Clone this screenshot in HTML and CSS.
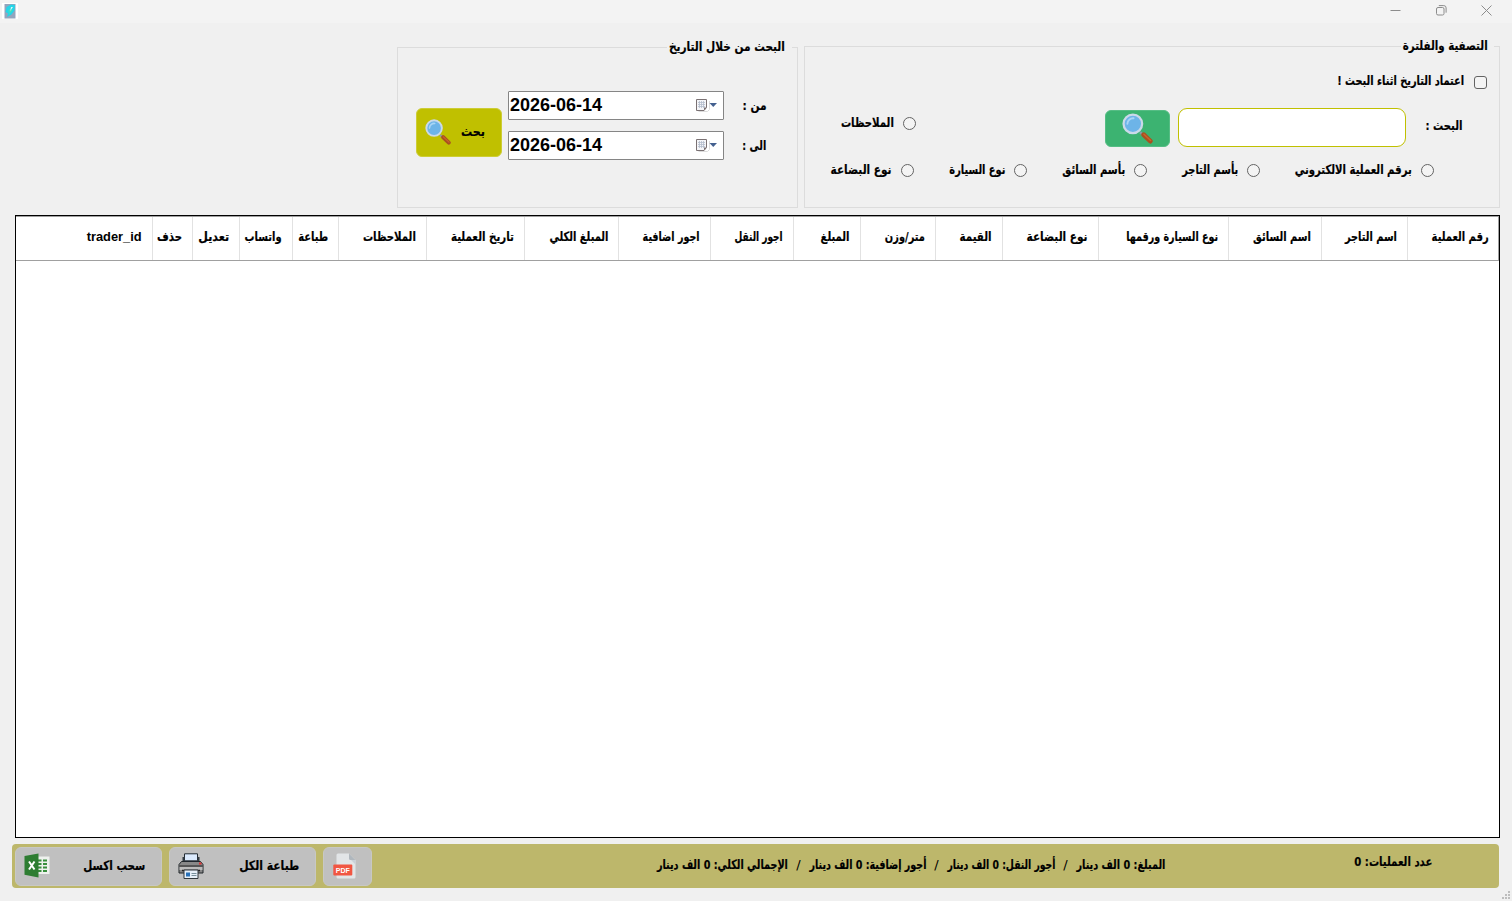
FILE: index.html
```html
<!DOCTYPE html>
<html lang="ar">
<head>
<meta charset="utf-8">
<title>العمليات</title>
<link rel="stylesheet" href="styles.css">
</head>
<body>
<svg class="defs" width="0" height="0">
  <symbol id="mag" viewBox="0 0 30 30">
    <path d="M17.5 18.5l3 3" stroke="#8a9aa8" stroke-width="2.4"/>
    <path d="M21 21l6.400 6.200" stroke="#a9501f" stroke-width="4.600" stroke-linecap="round"/>
    <path d="M21.200 20.600l6.500 6.100" stroke="#c9652b" stroke-width="1.400" stroke-linecap="round"/>
    <circle cx="10.500" cy="10.500" r="9" fill="#6db4e8" stroke="#cbd9e8" stroke-width="2.200"/>
    <path d="M5.200 10.500a5.500 5.500 0 0 1 6-5.400" fill="none" stroke="#a9d5f5" stroke-width="1.800" stroke-linecap="round"/>
  </symbol>
  <symbol id="cal" viewBox="0 0 22 14">
    <path d="M2.500 13.500h9l2-2V3" fill="none" stroke="#dcdcdc"/>
    <path d="M.5 1.500h10v8L8 12.500H.5z" fill="#f4f5f8" stroke="#7a7173"/>
    <path d="M2 4.500h7M2 6.500h7M2 8.500h7M3.500 3v7M5.500 3v7M7.500 3v7" stroke="#b4bccb" stroke-width=".8"/>
    <path d="M8 12.500V9.500h2.800z" fill="#7a7173"/>
    <path d="M13.500 5h7.500l-3.750 4z" fill="#44608f"/>
  </symbol>
</svg>

<header class="titlebar">
  <svg class="app-icon" width="16" height="16" viewBox="0 0 16 16">
    <path fill="#fff" d="M0 0h16v16H0z"/><path fill="#93a5bd" d="M2.500 1h11v14.500h-11z"/>
    <path fill="#25d5e8" d="M9 1.500l4 .5-.5 5.500-3 4-4.500 2.500 1-3.500-2.500-1.500 1-5z"/><path fill="#4fe3b0" d="M9 5L6 8.500h2L6.500 12l4-5H8.300z"/><path fill="#d9f7f6" d="M9 4h2L8.200 8z"/>
  </svg>
  <div class="controls">
    <svg width="11" height="11" viewBox="0 0 11 11"><path d="M.5 5.500h10"/></svg>
    <svg width="11" height="11" viewBox="0 0 11 11"><rect x=".5" y="2.500" width="7.500" height="7.500" rx="1.500"/><path d="M2.800.6h5a2.300 2.300 0 0 1 2.300 2.300v4.800"/></svg>
    <svg width="11" height="11" viewBox="0 0 11 11"><path d="M.5.5l10 10M10.500.5l-10 10"/></svg>
  </div>
</header>

<main>
  <div class="groups">
    <section class="group dates">
      <h2 class="legend"><span class="t" data-w="116">البحث من خلال التاريخ</span></h2>
      <button class="btn find"><svg width="26" height="26"><use href="#mag"/></svg><span class="t" data-w="24">بحث</span></button>
      <div class="date-rows">
        <div class="date-row"><div class="date"><span>2026-06-14</span><svg width="22" height="14"><use href="#cal"/></svg></div><span class="t" data-w="24">من :</span></div>
        <div class="date-row"><div class="date"><span>2026-06-14</span><svg width="22" height="14"><use href="#cal"/></svg></div><span class="t" data-w="24">الى :</span></div>
      </div>
    </section>

    <section class="group filters" dir="rtl">
      <h2 class="legend"><span class="t" data-w="85">التصفية والفلترة</span></h2>
      <label class="option by-date"><i class="check"></i><span class="t" data-w="127">اعتماد التاريخ اثناء البحث !</span></label>
      <div class="search-row">
        <span class="t" data-w="37">البحث :</span>
        <input class="search" type="text">
        <button class="btn go"><svg width="31" height="31"><use href="#mag"/></svg></button>
        <label class="option notes"><i class="radio"></i><span class="t" data-w="53">الملاحظات</span></label>
      </div>
      <div class="radio-row">
        <label class="option"><i class="radio"></i><span class="t" data-w="117">برقم العملية الالكتروني</span></label>
        <label class="option"><i class="radio"></i><span class="t" data-w="56">بأسم التاجر</span></label>
        <label class="option"><i class="radio"></i><span class="t" data-w="63">بأسم السائق</span></label>
        <label class="option"><i class="radio"></i><span class="t" data-w="56">نوع السيارة</span></label>
        <label class="option"><i class="radio"></i><span class="t" data-w="61">نوع البضاعة</span></label>
      </div>
    </section>
  </div>

  <section class="table">
    <div class="thead" dir="rtl">
      <div><span class="t" data-w="57">رقم العملية</span></div>
      <div><span class="t" data-w="52">اسم التاجر</span></div>
      <div><span class="t" data-w="58">اسم السائق</span></div>
      <div><span class="t" data-w="92">نوع السيارة ورقمها</span></div>
      <div><span class="t" data-w="61">نوع البضاعة</span></div>
      <div><span class="t" data-w="32">القيمة</span></div>
      <div><span class="t" data-w="40">متر/وزن</span></div>
      <div><span class="t" data-w="29">المبلغ</span></div>
      <div><span class="t" data-w="48">اجور النقل</span></div>
      <div><span class="t" data-w="57">اجور اضافية</span></div>
      <div><span class="t" data-w="59">المبلغ الكلي</span></div>
      <div><span class="t" data-w="63">تاريخ العملية</span></div>
      <div><span class="t" data-w="53">الملاحظات</span></div>
      <div><span class="t" data-w="30">طباعة</span></div>
      <div><span class="t" data-w="37">واتساب</span></div>
      <div><span class="t" data-w="31">تعديل</span></div>
      <div><span class="t" data-w="25">حذف</span></div>
      <div><span class="t latin" data-w="55">trader_id</span></div>
    </div>
  </section>

  <footer class="bar">
    <button class="btn tool wide">
      <svg width="26" height="26" viewBox="0 0 26 26"><path fill="#eef1ee" d="M13 3.500h12.500v17.500H13z"/><path d="M14 7.500h3.500M14 11h3.500M14 14.500h3.500M14 18h3.500M19 7.500h4M19 11h4M19 14.500h4M19 18h4" stroke="#388e3c" stroke-width="2"/><path fill="#2e7d32" d="M.5 3L14.500.5v24L.5 21.700z"/><path d="M5 8.500l5.500 8M10.500 8.500L5 16.500" stroke="#fff" stroke-width="2"/></svg>
      <span class="t" data-w="62">سحب اكسل</span>
    </button>
    <button class="btn tool wide">
      <svg width="26" height="26" viewBox="0 0 26 26"><path fill="#888" stroke="#20262b" d="M3.500 8.500h19l2.500 3v8.500H1v-8.500z"/><path fill="#dbeafd" stroke="#222b33" d="M6.500.8h13v7h-13z"/><path fill="#333b42" d="M4.500 4h2v4h-2zM19.500 4h2v4h-2z"/><path fill="#555" d="M1.500 12h23v2h-23z"/><path fill="#bbb" d="M1.500 14h23v3h-23z"/><path stroke="#222" stroke-width="1.500" d="M4 17.500h18"/><path fill="#e8f1fa" stroke="#30373c" d="M6 17h14v8.500H6z"/><path fill="#2870b8" d="M8 19.500h4v4H8z"/><path stroke="#78909c" d="M13.500 20.500h5M13.500 22.500h5"/><path fill="#d33" d="M21 9.500h2.500v2H21z"/></svg>
      <span class="t" data-w="60">طباعة الكل</span>
    </button>
    <button class="btn tool pdf">
      <svg width="24" height="26" viewBox="0 0 24 26"><path fill="#e2e5e7" d="M5 .5h11l6.500 6.500v17a1.500 1.500 0 0 1-1.500 1.500H5A1.500 1.500 0 0 1 3.500 24V2A1.500 1.500 0 0 1 5 .5z"/><path fill="#b0b7bd" d="M16 .5L22.500 7H17.500A1.500 1.500 0 0 1 16 5.500z"/><path fill="#cad1d8" d="M18 7h4.500v4.500z"/><rect x=".3" y="11.500" width="19" height="11" rx="1" fill="#f15642"/><text x="9.800" y="19.600" class="pdf-text">PDF</text></svg>
    </button>
    <div class="totals" dir="rtl">
      <span class="t" data-w="89">المبلغ: 0 الف دينار</span><i>/</i>
      <span class="t" data-w="108">أجور النقل: 0 الف دينار</span><i>/</i>
      <span class="t" data-w="117">أجور إضافية: 0 الف دينار</span><i>/</i>
      <span class="t" data-w="131">الإجمالي الكلي: 0 الف دينار</span>
    </div>
    <div class="count"><span class="t" data-w="78">عدد العمليات: 0</span></div>
  </footer>
</main>
<svg class="grip" width="9" height="9" viewBox="0 0 9 9"><path fill="#bdbdbd" d="M6 0h2v2H6zM3 3h2v2H3zM6 3h2v2H6zM0 6h2v2H0zM3 6h2v2H3zM6 6h2v2H6z"/></svg>
<script src="fit.js"></script>
</body>
</html>
```
FILE: styles.css
```css
* { box-sizing: border-box; }
body { margin: 0; height: 901px; overflow: hidden; background: #f0f0f0; color: #000; font: bold 13px/20px "DejaVu Sans", sans-serif; }
.defs { position: absolute; }
svg { display: block; flex: none; }
.titlebar { height: 23px; background: #f3f3f3; display: flex; justify-content: space-between; padding: 3px 20px 0 2px; }
.controls { display: flex; gap: 34.5px; padding-top: 2px; }
.controls svg { fill: none; stroke: #8c8c8c; }
.t { display: block; flex: none; direction: rtl; white-space: nowrap; -webkit-text-stroke: .2px #000; }
.t > span { display: inline-block; transform-origin: right center; }
.latin { font-family: "Liberation Sans", sans-serif; -webkit-text-stroke: 0; }
main { display: flex; flex-direction: column; }
.groups { display: flex; gap: 6px; padding: 23px 12px 0 397px; height: 192px; }
.group { position: relative; border: 1px solid #dcdcdc; }
.legend { position: absolute; top: -11px; right: 5px; margin: 0; padding: 0 7px 0 2px; background: #f0f0f0; font-size: 13px; line-height: 20px; }
.filters .legend { padding-right: 6px; }
.dates { width: 401px; height: 161px; margin-top: 1px; display: flex; align-items: flex-start; padding: 43px 0 0 18px; gap: 7px; }
.btn { border: 1px solid; padding: 0; font: inherit; color: #000; border-radius: 6px; display: flex; align-items: center; }
.find { width: 86px; height: 49px; margin: 17px -1px 0 0; background: #c0c000; border-color: #cdcd35; padding: 0 0 1px 8px; gap: 10px; }
.date-rows { display: grid; gap: 11px; }
.date-row { display: flex; align-items: center; gap: 18px; }
.date { width: 216px; height: 29px; background: #fff; border: 1px solid #858585; border-radius: 1px; display: flex; align-items: center; justify-content: space-between; padding: 0 5px 0 1px; font: bold 18px "Liberation Sans", sans-serif; }
.date svg { margin-top: -2px; }
.filters { width: 696px; height: 162px; padding-top: 24px; }
.option { display: flex; align-items: center; gap: 9px; }
.check, .radio { width: 13px; height: 13px; border: 1px solid #636363; background: #f4f4f4; border-radius: 50%; flex: none; }
.check { border-radius: 3px; margin-top: 3px; }
.by-date { height: 20px; padding-right: 12px; gap: 10px; }
.search-row { height: 39px; margin-top: 17px; padding-right: 37px; display: flex; align-items: center; }
.search-row > .t { margin-top: -3px; }
.search { width: 228px; height: 39px; margin: 0 19px 0 8px; border: 1px solid #c0c000; border-radius: 9px; background: #fff; }
.go { width: 65px; height: 37px; margin-top: 1px; background: #3cb371; border-color: #55bd84; justify-content: center; }
.notes { margin: -8px 189px 0 0; }
.notes .t { margin-top: -2px; }
.radio-row { display: flex; gap: 35px; padding-right: 65px; margin-top: 13px; }
.table { width: 1485px; height: 623px; margin-left: 15px; border: 1px solid #000; background: #fff; }
.thead { height: 45px; border: solid #a0a0a0; border-width: 1px 1px 1px 0; display: grid; grid-template-columns: 91px 86px 93px 130px 96px 67px 75px 67px 83px 92px 94px 98px 88px 46px 53px 47px 40px 1fr; }
.thead > div { border-left: 1px solid #e2e2e2; padding: 10px 10px 0 0; }
.thead > div:first-child { padding-right: 9px; }
.thead > div:last-child { border: 0; }
.bar { width: 1487px; height: 44px; margin: 6px 0 0 12px; padding: 3px; border-radius: 4px; background: #bdb76b; display: flex; gap: 7px; }
.tool { height: 39px; background: #c0c0c0; border-color: #c8c8c4; }
.wide { width: 147px; justify-content: space-between; padding: 0 16px 1px 8px; }
.pdf { width: 49px; padding: 0 0 1px 9px; }
.pdf-text { font: bold 7px "Liberation Sans", sans-serif; fill: #fff; text-anchor: middle; }
.totals { display: flex; margin: 8px 0 0 278px; }
.totals i { width: 21px; text-align: center; font-style: normal; font-weight: normal; }
.count { margin: 5px 0 0 182px; }
.grip { position: absolute; right: 1px; bottom: 1px; }
```
FILE: fit.js
```js
document.querySelectorAll('.t').forEach(function (el) {
  var inner = document.createElement('span');
  inner.textContent = el.textContent;
  el.textContent = '';
  el.appendChild(inner);
  var natural = inner.getBoundingClientRect().width;
  el.style.width = el.dataset.w + 'px';
  inner.style.transform = 'scaleX(' + el.dataset.w / natural + ')';
});
```
